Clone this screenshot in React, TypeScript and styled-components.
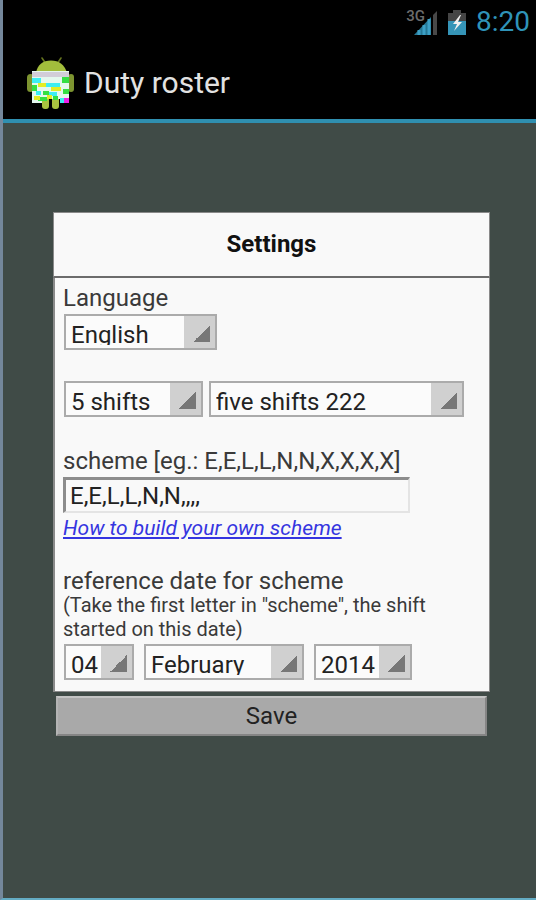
import React, { useState } from "react";
import styled, { createGlobalStyle } from "styled-components";

const GlobalStyle = createGlobalStyle`
  *, *::before, *::after { box-sizing: border-box; }
  body { margin: 0; background: #404b47; font-family: Roboto, "Noto Sans", sans-serif; }
`;

const Screen = styled.div`
  min-height: 100vh;
  display: flex;
  flex-direction: column;
  background: #404b47;
  border-left: 3px solid #74879b;
  border-bottom: 2px solid #64acc4;
`;

const StatusBar = styled.div`
  display: flex;
  justify-content: flex-end;
  align-items: center;
  gap: 10px;
  height: 44px;
  padding-right: 6px;
  background: #000;
  color: #2f93b8;
  font-size: 28px;
  line-height: 44px;
`;

const NetworkStatus = styled.div`
  display: flex;
  align-items: flex-start;
  height: 28px;
`;

const NetworkType = styled.span`
  margin-right: -11px;
  color: #6c6c6c;
  font-size: 15px;
  line-height: 16px;
  font-weight: 500;
`;

const TitleBar = styled.header`
  display: flex;
  align-items: center;
  gap: 8px;
  height: 79px;
  padding: 2px 22px 0;
  background: #000;
  border-bottom: 4px solid #2f8fb0;
`;

const AppTitle = styled.h1`
  margin: 0;
  color: #e2e2e2;
  font-size: 30px;
  line-height: 40px;
  font-weight: 400;
`;

const Content = styled.main`
  padding: 89px 46px 24px 50px;
`;

const PanelHeader = styled.h2`
  margin: 0;
  padding: 15px 0 16px;
  background: #f9f9f9;
  border: 1px solid #8a8a8a;
  border-bottom: 2px solid #6c6c6c;
  color: #111;
  font-size: 24px;
  line-height: 32px;
  font-weight: 700;
  text-align: center;
`;

const PanelBody = styled.div`
  display: flex;
  flex-direction: column;
  padding: 5px 9px 11px 8px;
  background: #f9f9f9;
  border: solid #8a8a8a;
  border-width: 0 1px 1px 2px;
  color: #3a3a3a;
`;

const Group = styled.div<{ $gap: number }>`
  margin-top: ${(p) => p.$gap}px;
`;

const Label = styled.label<{ $compact?: boolean }>`
  display: block;
  font-size: 24px;
  line-height: ${(p) => (p.$compact ? 24 : 31)}px;
`;

const Hint = styled.p`
  margin: 0;
  font-size: 20px;
  line-height: 24px;
`;

const Row = styled.div<{ $gap: number }>`
  display: flex;
  gap: ${(p) => p.$gap}px;
  padding-left: 1px;
`;

const Select = styled.select<{ $width: number }>`
  appearance: none;
  width: ${(p) => p.$width}px;
  height: 36px;
  margin: 0;
  padding: 7px 32px 3px 5px;
  border: 2px solid #ababab;
  border-radius: 0;
  color: #222;
  font: 400 24px/24px Roboto, "Noto Sans", sans-serif;
  text-overflow: clip;
  background:
    linear-gradient(to bottom right, transparent 50%, #777 50%) right 5px bottom 6px / 17px 17px no-repeat,
    linear-gradient(#d0d0d0, #d0d0d0) right top / 31px 100% no-repeat,
    #fbfbfb;
`;

const SchemeInput = styled.input`
  display: block;
  width: 347px;
  max-width: 100%;
  height: 36px;
  padding: 2px 4px;
  border: solid;
  border-width: 3px 2px 2px 3px;
  border-color: #8c8c8c #e4e4e4 #e4e4e4 #8c8c8c;
  border-radius: 0;
  background: #f9f9f9;
  color: #222;
  font: 400 24px/28px Roboto, "Noto Sans", sans-serif;
`;

const HelpLink = styled.a`
  display: block;
  color: #3535e0;
  font-size: 21px;
  line-height: 30px;
  font-style: italic;
`;

const SaveButton = styled.button`
  display: block;
  width: calc(100% - 6px);
  height: 40px;
  margin: 4px 3px 0;
  padding: 0;
  border: 2px solid;
  border-color: #c4c4c4 #858585 #858585 #b4b4b4;
  border-radius: 0;
  background: #a9a9a9;
  color: #222;
  font: 400 24px/32px Roboto, "Noto Sans", sans-serif;
`;

function RobotIcon() {
  return (
    <svg width="51" height="54" viewBox="0 0 51 54" aria-hidden="true">
      <g stroke="#66751f" strokeWidth="1.6" strokeLinecap="round">
        <path d="M17 2l4 6M36 2l-4 6" />
      </g>
      <path d="M11 17C12 9 18 4.500 26 4.500S40 9 42 17z" fill="#a3bd3c" />
      <rect x="2" y="18" width="7" height="18" rx="3.500" fill="#7d9430" />
      <rect x="43" y="18" width="6" height="18" rx="3" fill="#7d9430" />
      <rect x="17" y="40" width="7" height="13" rx="3" fill="#a9c23f" />
      <rect x="27" y="40" width="7" height="13" rx="3" fill="#a9c23f" />
      <path d="M7 15h37v32h-9v-4h-18v4H7z" fill="#e4f8ee" />
      <rect x="7" y="16" width="37" height="5" fill="#d2cdd8" />
      <g fill="#3ceef2">
        <rect x="7" y="22" width="9" height="5" />
        <rect x="21" y="27" width="14" height="4" />
        <rect x="11" y="35" width="5" height="4" />
        <rect x="24" y="36" width="8" height="4" />
        <rect x="35" y="42" width="4" height="5" />
      </g>
      <g fill="#35df42">
        <rect x="37" y="21" width="7" height="6" />
        <rect x="7" y="29" width="5" height="6" />
        <rect x="18" y="35" width="6" height="4" />
        <rect x="38" y="33" width="6" height="5" />
        <rect x="13" y="41" width="9" height="4" />
        <rect x="28" y="40" width="5" height="4" />
      </g>
      <g fill="#e3ec25">
        <rect x="13" y="27" width="8" height="4" />
        <rect x="26" y="31" width="10" height="4" />
        <rect x="9" y="40" width="6" height="4" />
        <rect x="22" y="39" width="5" height="4" />
      </g>
      <rect x="39" y="42" width="5" height="5" fill="#ee20e8" />
    </svg>
  );
}

function SignalIcon() {
  return (
    <svg width="24" height="28" viewBox="8 0 24 28" role="img" aria-label="Signal strength">
      <path d="M8 27L25 9V27z" fill="#257795" />
      <path d="M13 22v5M18 17v10M23 11v16" stroke="#3c9fc5" strokeWidth="3" />
      <path d="M27 7l4-4v24h-4z" fill="#484848" />
    </svg>
  );
}

function BatteryIcon() {
  return (
    <svg width="18" height="28" viewBox="0 0 18 28" role="img" aria-label="Battery charging">
      <path d="M5 2h8v3h5v8H0V5h5z" fill="#454545" />
      <rect x="0" y="13" width="18" height="14" fill="#3594b7" />
      <path d="M12 7L5 16h4l-3 7 8-9h-4l3-7z" fill="#f0f0f0" />
    </svg>
  );
}

const MONTHS = ["January", "February", "March", "April", "May", "June", "July", "August", "September", "October", "November", "December"];
const DAYS = Array.from({ length: 31 }, (_, i) => String(i + 1).padStart(2, "0"));
const YEARS = ["2012", "2013", "2014", "2015", "2016"];

interface DropdownProps {
  id?: string;
  label?: string;
  width: number;
  initial: string;
  options: string[];
}

function Dropdown({ id, label, width, initial, options }: DropdownProps) {
  return (
    <Select id={id} aria-label={label} $width={width} defaultValue={initial}>
      {options.map((o) => (
        <option key={o}>{o}</option>
      ))}
    </Select>
  );
}

export default function App() {
  const [scheme, setScheme] = useState("E,E,L,L,N,N,,,,");
  return (
    <>
      <GlobalStyle />
      <Screen>
        <StatusBar>
          <NetworkStatus>
            <NetworkType>3G</NetworkType>
            <SignalIcon />
          </NetworkStatus>
          <BatteryIcon />
          <time>8:20</time>
        </StatusBar>
        <TitleBar>
          <RobotIcon />
          <AppTitle>Duty roster</AppTitle>
        </TitleBar>
        <Content>
          <form onSubmit={(e) => e.preventDefault()}>
            <PanelHeader>Settings</PanelHeader>
            <PanelBody>
              <Label htmlFor="language">Language</Label>
              <Row $gap={6}>
                <Dropdown id="language" width={153} initial="English" options={["English", "Deutsch"]} />
              </Row>
              <Group $gap={31}>
                <Row $gap={6}>
                  <Dropdown label="Number of shifts" width={139} initial="5 shifts" options={["3 shifts", "4 shifts", "5 shifts"]} />
                  <Dropdown label="Shift pattern" width={255} initial="five shifts 222" options={["five shifts 222"]} />
                </Row>
              </Group>
              <Group $gap={29}>
                <Label htmlFor="scheme">scheme [eg.: E,E,L,L,N,N,X,X,X,X]</Label>
                <SchemeInput id="scheme" value={scheme} onChange={(e) => setScheme(e.target.value)} />
                <HelpLink href="#scheme-help">How to build your own scheme</HelpLink>
              </Group>
              <Group $gap={26}>
                <Label htmlFor="day" $compact>reference date for scheme</Label>
                <Hint>(Take the first letter in "scheme", the shift started on this date)</Hint>
              </Group>
              <Group $gap={3}>
                <Row $gap={10}>
                  <Dropdown id="day" width={70} initial="04" options={DAYS} />
                  <Dropdown label="Month" width={160} initial="February" options={MONTHS} />
                  <Dropdown label="Year" width={98} initial="2014" options={YEARS} />
                </Row>
              </Group>
            </PanelBody>
            <SaveButton type="submit">Save</SaveButton>
          </form>
        </Content>
      </Screen>
    </>
  );
}
